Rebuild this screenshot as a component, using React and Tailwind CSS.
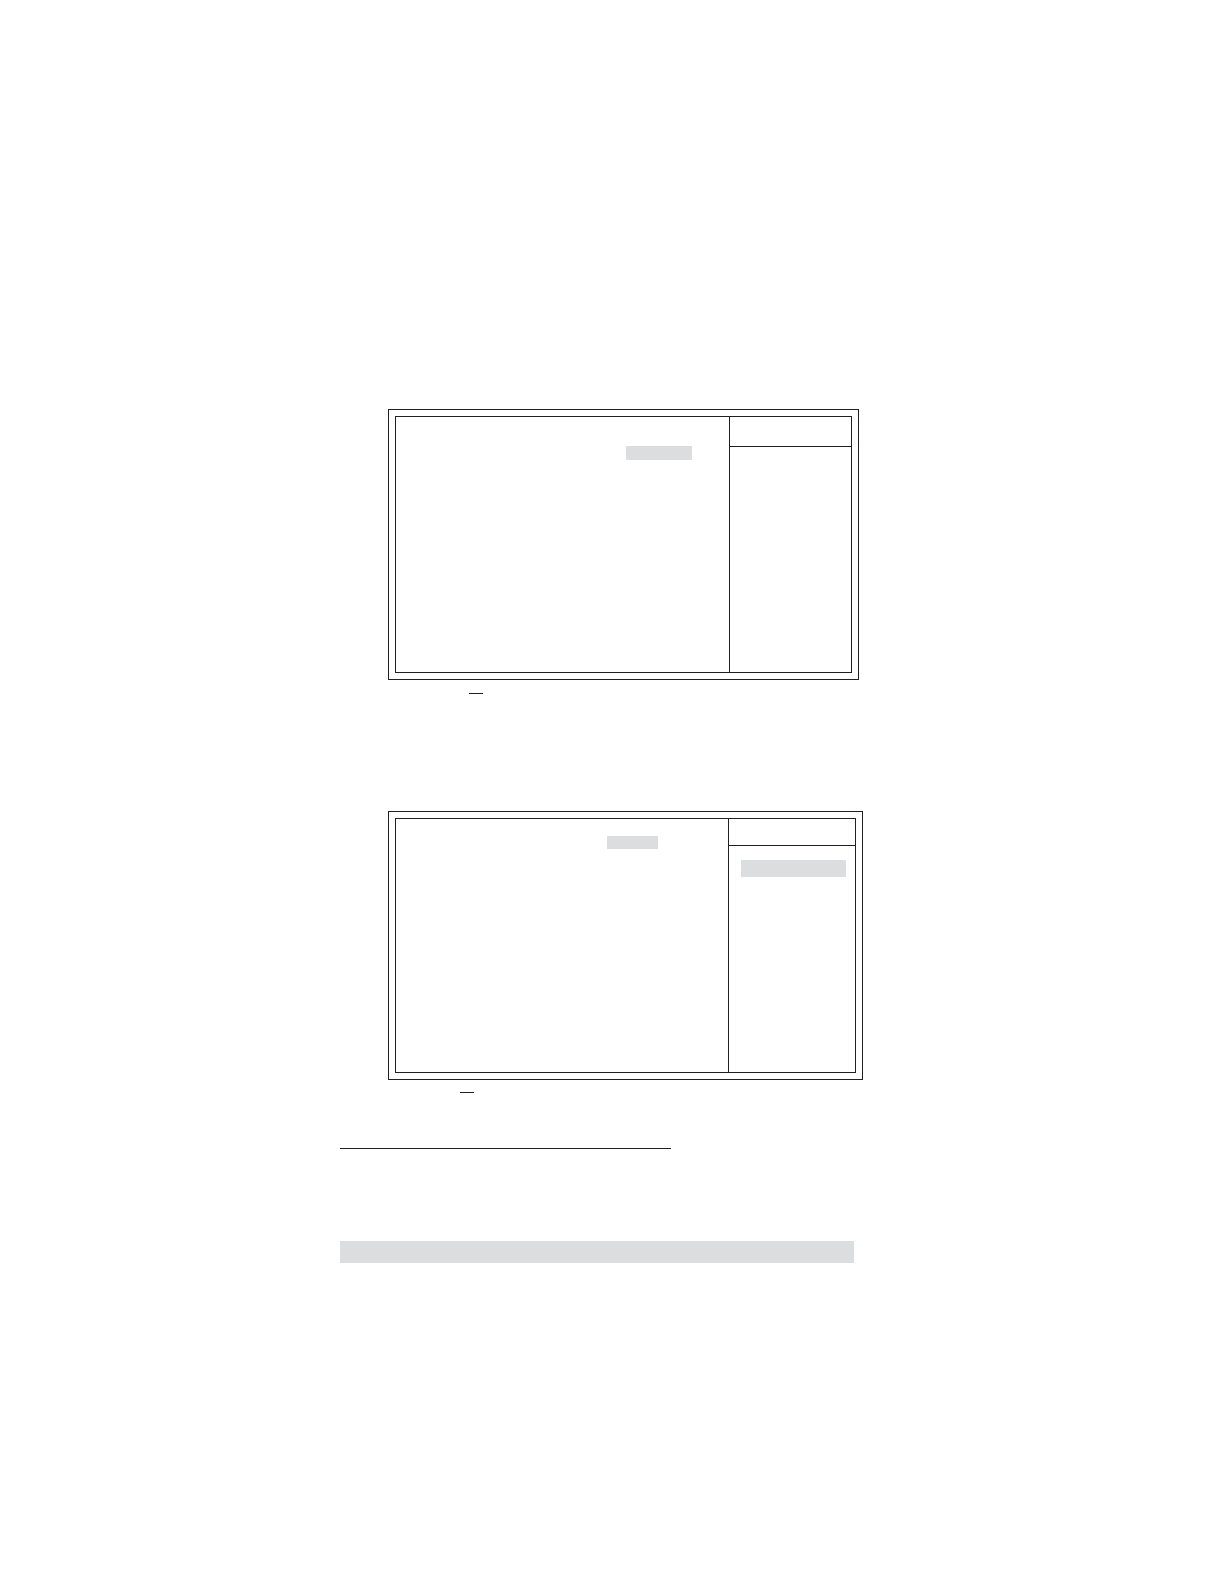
function SetupFrame({ frameClass, bodyClass, asideClass, headerClass, fieldClass, children }) {
  return (
    <section className={`ml-12 w-full border border-[#231f20] p-1.5 ${frameClass}`}>
      <div className={`flex border border-[#231f20] ${bodyClass}`}>
        <div className="flex flex-1 justify-end">
          <div className={`bg-[#dcddde] ${fieldClass}`} />
        </div>
        <aside className={`shrink-0 border-l border-[#231f20] ${asideClass}`}>
          <header className={`border-b border-[#231f20] ${headerClass}`} />
          {children}
        </aside>
      </div>
    </section>
  );
}

export default function App() {
  return (
    <main className="min-h-screen bg-white pt-[409px] pb-12 pl-[340px]">
      <SetupFrame
        frameClass="max-w-[471px]"
        bodyClass="min-h-[257px]"
        asideClass="w-[122px]"
        headerClass="h-[30px]"
        fieldClass="mt-[29px] mr-[37px] h-3.5 w-[66px]"
      />
      <hr className="mt-[13px] ml-[129px] w-3.5 border-[#231f20]" />

      <div className="mt-[117px]">
        <SetupFrame
          frameClass="max-w-[475px]"
          bodyClass="min-h-[255px]"
          asideClass="w-[127px]"
          headerClass="h-[27px]"
          fieldClass="mt-[17px] mr-[70px] h-[13px] w-[51px]"
        >
          <div className="mt-3.5 mr-[9px] ml-3 h-[17px] bg-[#dcddde]" />
        </SetupFrame>
      </div>
      <hr className="mt-3 ml-[120px] w-3.5 border-[#231f20]" />

      <hr className="mt-[55px] w-full max-w-[331px] border-[#231f20]" />
      <div className="mt-[92px] h-[22px] w-full max-w-[514px] bg-[#dcddde]" />
    </main>
  );
}
